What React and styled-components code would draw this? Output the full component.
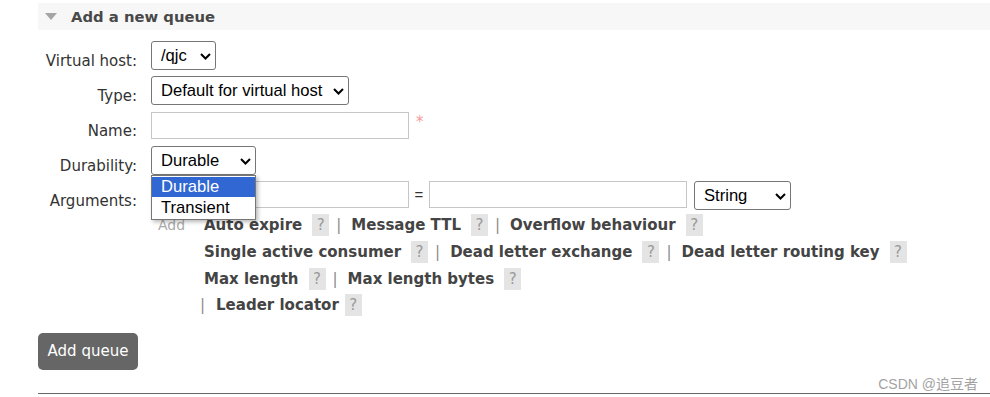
import React from 'react';
import styled, { createGlobalStyle } from 'styled-components';

const GlobalStyle = createGlobalStyle`
  html, body {
    margin: 0;
    padding: 0;
    background: #fff;
  }
  body {
    font-family: "DejaVu Sans", Verdana, sans-serif;
    color: #333;
  }
`;

const Page = styled.div`
  position: relative;
  width: 990px;
  height: 397px;
  padding: 3px 0 0 38px;
  box-sizing: border-box;
  overflow: hidden;
`;

const SectionHead = styled.h2`
  margin: 0;
  height: 27px;
  display: flex;
  align-items: center;
  gap: 14px;
  padding-left: 7px;
  background: #f7f7f7;
  color: #484848;
  font-size: 14.8px;
  font-weight: bold;
`;

const Caret = styled.span`
  width: 0;
  height: 0;
  border-left: 6px solid transparent;
  border-right: 6px solid transparent;
  border-top: 7px solid #a5a5a5;
`;

const Form = styled.div`
  display: grid;
  grid-template-columns: 99px auto;
  column-gap: 14px;
  row-gap: 6px;
  margin-top: 11px;
  justify-content: start;
`;

const Label = styled.label`
  align-self: start;
  text-align: right;
  padding-top: 11px;
  font-size: 15px;
  line-height: 18px;
  color: #333;
  white-space: nowrap;
`;

const Cell = styled.div`
  display: flex;
  align-items: center;
  gap: 6px;
`;

const SelectWrap = styled.div`
  position: relative;
  display: inline-flex;
  width: ${p => p.$w}px;
  height: 29px;
`;

const Select = styled.select`
  appearance: none;
  width: 100%;
  height: 100%;
  margin: 0;
  padding: 0 20px 0 9px;
  border: 1px solid #767676;
  border-radius: 3px;
  background: #fff;
  color: #000;
  font-family: "Liberation Sans", Arial, sans-serif;
  font-size: 16.6px;
`;

const Chevron = styled.svg`
  position: absolute;
  right: 5px;
  top: 12px;
  pointer-events: none;
`;

const Input = styled.input`
  box-sizing: border-box;
  width: 258px;
  height: 27px;
  margin: 0;
  border: 1px solid #c6c6c6;
  padding: 0 4px;
  background: #fff;
  font-family: "Liberation Sans", Arial, sans-serif;
  font-size: 15px;
`;

const Required = styled.span`
  color: #f49a9a;
  font-size: 15px;
  margin-left: 1px;
  align-self: flex-start;
  margin-top: 2px;
`;

const Dropdown = styled.div`
  position: absolute;
  top: 29px;
  left: 0;
  width: 105px;
  box-sizing: border-box;
  padding: 1px 0 1px;
  border: 1px solid #767676;
  background: #fff;
  box-shadow: 2px 2px 4px rgba(0, 0, 0, 0.28);
  z-index: 10;
`;

const Option = styled.div`
  height: ${p => p.$h}px;
  display: flex;
  align-items: center;
  padding-left: 9px;
  font-family: "Liberation Sans", Arial, sans-serif;
  font-size: 16.6px;
  color: ${p => (p.$active ? '#fff' : '#000')};
  background: ${p => (p.$active ? '#3067d3' : '#fff')};
`;

const ArgsCol = styled.div`
  display: flex;
  flex-direction: column;
`;

const ArgRow = styled.div`
  display: flex;
  align-items: flex-start;
`;

const Equals = styled.span`
  width: 20px;
  text-align: center;
  font-family: "Liberation Sans", Arial, sans-serif;
  font-size: 15px;
  line-height: 27px;
  color: #333;
`;

const HelpArea = styled.div`
  display: flex;
  margin-top: 2px;
`;

const AddText = styled.span`
  width: 49px;
  box-sizing: border-box;
  padding: 5px 0 0 7px;
  font-size: 14px;
  color: #aaa;
`;

const Links = styled.div`
  display: flex;
  flex-direction: column;
`;

const LinkRow = styled.div`
  display: flex;
  align-items: center;
  height: 26.7px;
  padding-left: ${p => p.$pad || 0}px;
  white-space: nowrap;
`;

const ArgLink = styled.span`
  font-size: 15px;
  font-weight: bold;
  color: #444;
`;

const Help = styled.span`
  display: inline-flex;
  align-items: center;
  justify-content: center;
  width: 17px;
  height: 22px;
  margin-left: ${p => (p.$gap != null ? p.$gap : 10)}px;
  background: #e4e4e4;
  color: #999;
  font-size: 15px;
`;

const Sep = styled.span`
  margin: 0 ${p => (p.$lead ? 11 : 10)}px 0 ${p => (p.$lead ? 0 : 7)}px;
  font-size: 15px;
  color: #8a8a8a;
`;

const Spacer = styled.span`
  width: 7px;
`;

const AddButton = styled.button`
  display: block;
  width: 100px;
  height: 37px;
  margin-top: 14px;
  border: 0;
  border-radius: 5px;
  background: #666;
  color: #fff;
  font-family: "DejaVu Sans", Verdana, sans-serif;
  font-size: 15px;
  padding: 0;
`;

const Rule = styled.hr`
  margin: 23px 0 0;
  border: 0;
  border-top: 1px solid #666;
  height: 0;
`;

const Watermark = styled.span`
  position: absolute;
  right: 12px;
  top: 373px;
  font-family: "Liberation Sans", "Noto Sans CJK SC", sans-serif;
  font-size: 14px;
  color: #a3a3a3;
`;

const ChevronIcon = () => (
  <Chevron width="11" height="7" viewBox="0 0 11 7">
    <path d="M1 1 L5.5 5.5 L10 1" fill="none" stroke="#000" strokeWidth="2" />
  </Chevron>
);

const SelectBox = ({ width, value, options, children }) => (
  <SelectWrap $w={width}>
    <Select defaultValue={value}>
      {options.map(o => (
        <option key={o}>{o}</option>
      ))}
    </Select>
    <ChevronIcon />
    {children}
  </SelectWrap>
);

const linkRows = [
  { pad: 4, items: [['Auto expire'], ['Message TTL'], ['Overflow behaviour']] },
  { pad: 4, items: [['Single active consumer'], ['Dead letter exchange'], ['Dead letter routing key']] },
  { pad: 4, items: [['Max length'], ['Max length bytes']] },
  { pad: 0, lead: true, items: [['Leader locator', 6]] },
];

export default function App() {
  return (
    <Page>
      <GlobalStyle />
      <SectionHead>
        <Caret />
        Add a new queue
      </SectionHead>

      <Form>
        <Label>Virtual host:</Label>
        <Cell>
          <SelectBox width={65} value="/qjc" options={['/qjc', '/']} />
        </Cell>

        <Label>Type:</Label>
        <Cell>
          <SelectBox
            width={198}
            value="Default for virtual host"
            options={['Default for virtual host', 'Classic', 'Quorum', 'Stream']}
          />
        </Cell>

        <Label>Name:</Label>
        <Cell>
          <Input />
          <Required>*</Required>
        </Cell>

        <Label>Durability:</Label>
        <Cell>
          <SelectBox width={105} value="Durable" options={['Durable', 'Transient']}>
            <Dropdown>
              <Option $active $h={20}>Durable</Option>
              <Option $h={21}>Transient</Option>
            </Dropdown>
          </SelectBox>
        </Cell>

        <Label>Arguments:</Label>
        <ArgsCol>
          <ArgRow>
            <Input />
            <Equals>=</Equals>
            <Input />
            <Spacer />
            <SelectBox width={97} value="String" options={['String', 'Number', 'Boolean', 'List']} />
          </ArgRow>
          <HelpArea>
            <AddText>Add</AddText>
            <Links>
              {linkRows.map((row, r) => (
                <LinkRow key={r} $pad={row.pad}>
                  {row.lead && <Sep $lead>|</Sep>}
                  {row.items.map(([name, gap], i) => (
                    <React.Fragment key={name}>
                      {i > 0 && <Sep>|</Sep>}
                      <ArgLink>{name}</ArgLink>
                      <Help $gap={gap}>?</Help>
                    </React.Fragment>
                  ))}
                </LinkRow>
              ))}
            </Links>
          </HelpArea>
        </ArgsCol>
      </Form>

      <AddButton>Add queue</AddButton>
      <Rule />
      <Watermark>CSDN @追豆者</Watermark>
    </Page>
  );
}
